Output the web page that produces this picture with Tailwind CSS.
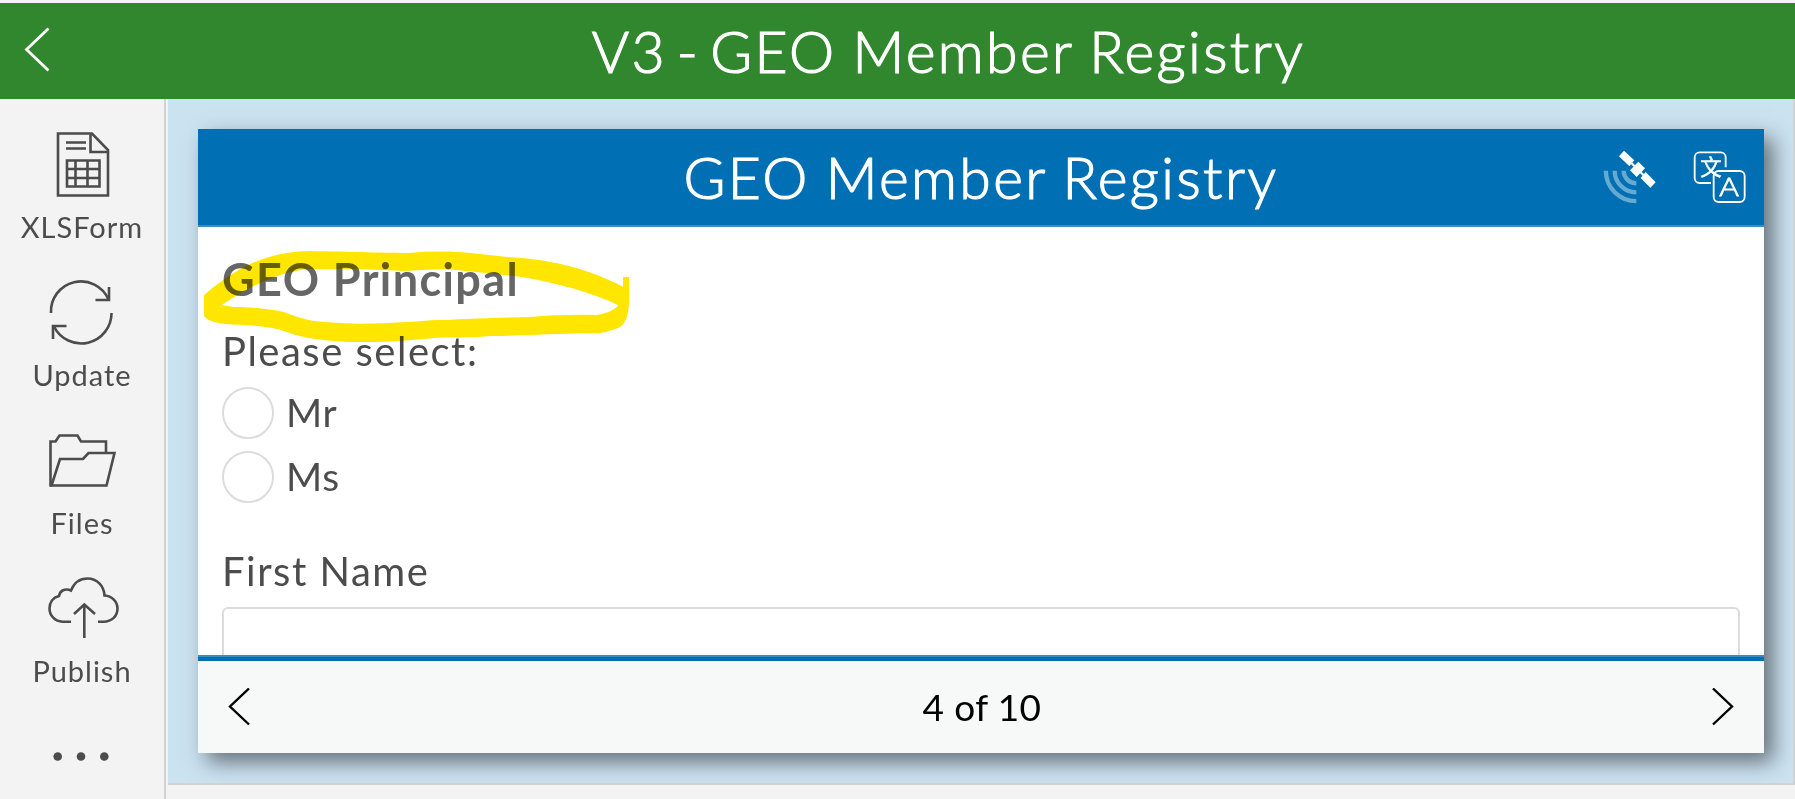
<!DOCTYPE html>
<html lang="en">
<head>
  <meta charset="UTF-8" />
  <meta name="viewport" content="width=device-width, initial-scale=1.0"/>
  <title>GEO Member Registry</title>
  <script src="https://cdn.jsdelivr.net/npm/@tailwindcss/browser@4"></script>
</head>
<body class="bg-[#f3f3f3] h-[799px] overflow-hidden flex flex-col font-['Lato',sans-serif] text-[#4c4c4c]">

  <!-- App header -->
  <header class="mt-[3px] h-24 shrink-0 bg-[#31872e] text-white flex items-center">
    <button class="w-[102px] h-full" aria-label="Back">
      <svg class="w-[102px] h-24" viewBox="0 0 102 96" fill="none" stroke="currentColor" stroke-width="2.8">
        <path d="M48.5 25.5 26.5 46.5 48.5 67.5"/>
      </svg>
    </button>
    <h1 class="flex-1 text-center text-[57px] leading-none font-light tracking-[2.4px] [word-spacing:-2px] whitespace-nowrap [-webkit-text-stroke:1.2px_white]"><span class="[word-spacing:-8px]">V3 - </span>GEO Member Registry</h1>
  </header>

  <div class="flex flex-1 min-h-0">

    <!-- Sidebar -->
    <nav class="w-[166px] shrink-0 border-r-2 border-[#d2d2d2] pt-[26px] flex flex-col items-center text-[29px] leading-[44px] tracking-[1px]">
      <a class="h-[148px] w-full shrink-0 flex flex-col items-center">
        <svg class="size-20 shrink-0" viewBox="0 0 80 80" fill="none" stroke="currentColor" stroke-width="2.6">
          <path d="M16 8.5H50L66 25V70.5H16Z"/>
          <path d="M48.5 8.5V27H66M24 17.5H44M24 23.5H44"/>
          <path d="M25 35.5H57.5V61.5H25ZM33.5 35V62M45.5 35V62M25 44H58M25 53H58"/>
        </svg>
        <span>XLSForm</span>
      </a>
      <a class="h-[148px] w-full shrink-0 flex flex-col items-center">
        <svg class="size-20 shrink-0" viewBox="0 0 80 80" fill="none" stroke="currentColor" stroke-width="2.6">
          <path d="M9 40A30 30 0 0 1 66.5 26.5M69.5 40A30.3 30.3 0 0 1 12 53.5"/>
          <path d="M67 14V27H53.5M11 66V53H24.5"/>
        </svg>
        <span>Update</span>
      </a>
      <a class="h-[148px] w-full shrink-0 flex flex-col items-center">
        <svg class="size-20 shrink-0" viewBox="0 0 80 80" fill="none" stroke="currentColor" stroke-width="2.6">
          <path d="M8.5 65.5V20.5H13.5L17.5 14.5H35.5L39 20.5H64V32"/>
          <path d="M72.5 32 64.5 64.5H9.5L18 38H41L46.5 32Z"/>
        </svg>
        <span>Files</span>
      </a>
      <a class="h-[148px] w-full shrink-0 flex flex-col items-center">
        <svg class="size-20 shrink-0" viewBox="0 0 80 80" fill="none" stroke="currentColor" stroke-width="2.6">
          <path d="M29 52.7H20.5C13 52.7 7.5 46.5 7.5 39.5C7.5 33.5 11 28.5 17 27C18 21.5 23 19 29 21.5C32 14 38 9.5 45.5 9.5C55 9.5 62 17 62.5 26.5C70 27 75.5 32.5 75.5 39.5C75.5 47 70 52.7 61.5 52.7H56"/>
          <path d="M42.3 69V35.5M32 45 42.3 35.5 53 45"/>
        </svg>
        <span>Publish</span>
      </a>
      <svg class="size-20 shrink-0" viewBox="0 0 80 80" fill="currentColor">
        <circle cx="15.7" cy="39.5" r="4.3"/>
        <circle cx="39" cy="39.5" r="4.3"/>
        <circle cx="62.3" cy="39.5" r="4.3"/>
      </svg>
    </nav>

    <!-- Form preview -->
    <main class="flex-1 h-[686px] ml-[2px] relative overflow-hidden bg-[#cbe2f1] border-r-2 border-b-2 border-[#d2d2d2] pt-[30px] pl-[30px]">
      <section class="w-[1566px] h-[624px] bg-white flex flex-col shadow-[9px_9px_20px_rgba(0,0,0,0.5)]">
        <div class="h-[98px] shrink-0 bg-[#006fb3] border-b-2 border-[#3a8dc3] text-white flex items-center pr-[17px]">
          <h2 class="flex-1 pl-[161px] text-center text-[57px] leading-none font-light tracking-[2.4px] [word-spacing:-2px] whitespace-nowrap [-webkit-text-stroke:1.2px_white]">GEO Member Registry</h2>
          <div class="flex gap-9">
            <svg class="size-[54px]" viewBox="0 0 162 162">
              <g fill="none" stroke="#66a9d1" stroke-width="13">
                <path d="M8.5 62A91.5 91.5 0 0 0 100 153.5"/>
                <path d="M35 62A65 65 0 0 0 100 127"/>
                <path d="M62 62A38 38 0 0 0 100 100"/>
              </g>
              <path d="M82 36 124 78" stroke="white" stroke-width="6"/>
              <path fill="white" d="M63 2 94 31 79 49 48 19ZM106 35 126 55 101 81 81 61ZM128 66 158 97 142 113 113 84Z"/>
            </svg>
            <svg class="size-[54px]" viewBox="0 0 162 162" fill="none" stroke="white" stroke-width="5.5">
              <path d="M98 52V22A15 15 0 0 0 83 7H20A15 15 0 0 0 5 22V84A15 15 0 0 0 20 99H54"/>
              <rect x="62" y="63" width="93" height="93" rx="15"/>
              <text x="53.5" y="75" text-anchor="middle" font-size="64" fill="white" stroke-width="1.5" class="font-['Noto_Sans_CJK_SC',sans-serif]">文</text>
              <text x="79" y="137" textLength="59" lengthAdjust="spacingAndGlyphs" font-size="78" fill="white" stroke-width="2.5" class="font-light tracking-normal">A</text>
            </svg>
          </div>
        </div>

        <div class="flex-1 min-h-0 overflow-hidden px-6 pt-[22px] text-[40px] leading-[72px] tracking-[1.5px]">
          <h3 class="text-[45px] leading-[60px] font-bold text-[#666] tracking-[1.4px]">GEO Principal</h3>
          <p class="mt-[6px]">Please select:</p>
          <label class="h-[52px] flex items-center gap-3 text-[39px] leading-[50px] tracking-[0.6px]">
            <span class="size-[52px] rounded-full border-2 border-[#dcdcdc]"></span>
            <span class="pb-[2px]">Mr</span>
          </label>
          <label class="mt-3 h-[52px] flex items-center gap-3 text-[39px] leading-[50px] tracking-[0.6px]">
            <span class="size-[52px] rounded-full border-2 border-[#dcdcdc]"></span>
            <span class="pb-[2px]">Ms</span>
          </label>
          <p class="mt-8">First Name</p>
          <input type="text" aria-label="First Name" class="block w-full h-20 border-2 border-[#dcdcdc] rounded-md"/>
        </div>

        <div class="h-[98px] shrink-0 bg-[#f7f9f8] border-t-2 border-[#3a8dc3] text-black">
          <div class="h-24 border-t-4 border-[#006fb3] flex items-center justify-between px-[30px]">
            <svg class="w-[22px] h-[38px]" viewBox="0 0 22 38" fill="none" stroke="currentColor" stroke-width="2.4">
              <path d="M21 0.5 2 18.5 21 36.5"/>
            </svg>
            <span class="text-[37px] leading-none tracking-[0.4px] pl-[2px] pb-[2px]">4 of 10</span>
            <svg class="w-[22px] h-[38px]" viewBox="0 0 22 38" fill="none" stroke="currentColor" stroke-width="2.4">
              <path d="M1 0.5 20 18.5 1 36.5"/>
            </svg>
          </div>
        </div>
      </section>

      <!-- Highlighter mark around the section name -->
      <svg class="absolute left-[22px] top-[121px] w-[460px] h-[160px] mix-blend-multiply" viewBox="0 0 1380 480">
        <path fill="#ffe600" fill-rule="evenodd" d="M42 225C110 170 200 95 360 93C480 95 600 99 660 99C720 93 790 93 850 100L960 112C1100 120 1200 150 1299 200V171H1317V250C1315 300 1300 325 1265 330C1235 342 1220 339 1180 340C1100 341 1000 347 900 348C860 353 800 352 740 353C660 361 600 366 520 366C440 366 400 360 350 353C310 345 290 335 265 328C200 313 150 316 105 312C70 308 50 300 42 287Z
          M95 255C150 220 250 155 360 147H500L650 153C720 149 760 146 800 150C900 160 950 165 1000 172C1100 190 1200 215 1285 256C1270 275 1240 282 1220 285C1150 283 1080 286 1020 291C900 293 800 299 740 300C650 306 600 311 500 311C430 308 400 306 370 303C340 297 310 288 282 276C230 265 160 260 130 261Z"/>
      </svg>
    </main>
  </div>

</body>
</html>
